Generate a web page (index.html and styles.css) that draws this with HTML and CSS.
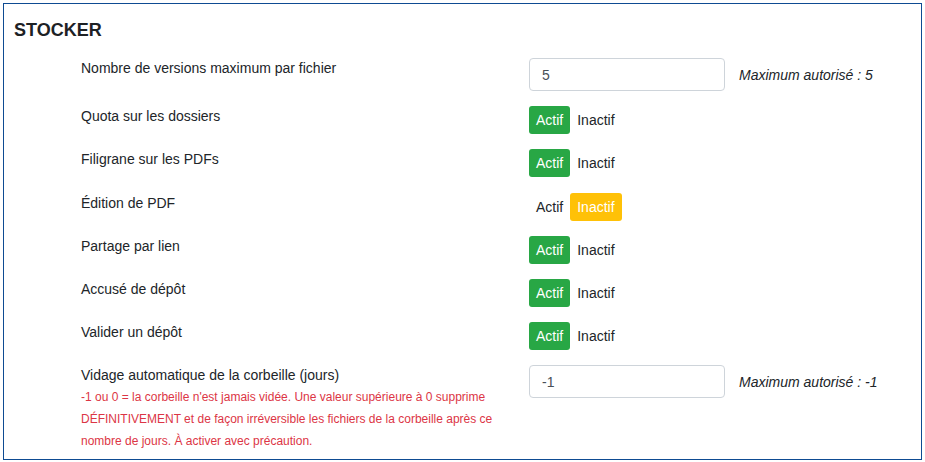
FILE: index.html
```html
<!DOCTYPE html>
<html lang="fr">
<head>
	<meta charset="UTF-8">
	<title>Stocker</title>
	<link rel="stylesheet" href="styles.css">
</head>
<body>
	<div class="panel">
		<h2 class="panel-title">STOCKER</h2>
		<div class="fields">
			<div class="field">
				<div class="field-label">Nombre de versions maximum par fichier</div>
				<div class="field-control">
					<input class="input" type="text" value="5">
					<span class="hint">Maximum autorisé : 5</span>
				</div>
			</div>
			<div class="field">
				<div class="field-label">Quota sur les dossiers</div>
				<div class="field-control">
					<div class="toggle">
						<span class="opt on">Actif</span>
						<span class="opt">Inactif</span>
					</div>
				</div>
			</div>
			<div class="field">
				<div class="field-label">Filigrane sur les PDFs</div>
				<div class="field-control">
					<div class="toggle">
						<span class="opt on">Actif</span>
						<span class="opt">Inactif</span>
					</div>
				</div>
			</div>
			<div class="field">
				<div class="field-label">Édition de PDF</div>
				<div class="field-control">
					<div class="toggle">
						<span class="opt">Actif</span>
						<span class="opt off">Inactif</span>
					</div>
				</div>
			</div>
			<div class="field">
				<div class="field-label">Partage par lien</div>
				<div class="field-control">
					<div class="toggle">
						<span class="opt on">Actif</span>
						<span class="opt">Inactif</span>
					</div>
				</div>
			</div>
			<div class="field">
				<div class="field-label">Accusé de dépôt</div>
				<div class="field-control">
					<div class="toggle">
						<span class="opt on">Actif</span>
						<span class="opt">Inactif</span>
					</div>
				</div>
			</div>
			<div class="field">
				<div class="field-label">Valider un dépôt</div>
				<div class="field-control">
					<div class="toggle">
						<span class="opt on">Actif</span>
						<span class="opt">Inactif</span>
					</div>
				</div>
			</div>
			<div class="field">
				<div class="field-label">
					Vidage automatique de la corbeille (jours)
					<p class="warning">-1 ou 0 = la corbeille n'est jamais vidée. Une valeur supérieure à 0 supprime DÉFINITIVEMENT et de façon irréversible les fichiers de la corbeille après ce nombre de jours. À activer avec précaution.</p>
				</div>
				<div class="field-control">
					<input class="input" type="text" value="-1">
					<span class="hint">Maximum autorisé : -1</span>
				</div>
			</div>
		</div>
	</div>
</body>
</html>
```

FILE: styles.css
```css
* {
	margin: 0;
	padding: 0;
	box-sizing: border-box;
}
body {
	font-family: "Liberation Sans", Arial, sans-serif;
	font-size: 14px;
	color: #212529;
	background-color: #fff;
}
.panel {
	width: 919px;
	height: 457px;
	margin: 3px;
	border: 1px solid #0e4b92;
	padding: 15px 10px 7px 10px;
	overflow: hidden;
}
.panel-title {
	font-size: 18px;
	font-weight: bold;
	line-height: 22px;
	color: #1d2124;
	margin-bottom: 17px;
}
.fields {
	display: flex;
	flex-direction: column;
	gap: 15.2px;
	margin-left: 67px;
}
.field {
	display: grid;
	grid-template-columns: 418px auto;
	column-gap: 30px;
	align-items: start;
}
.field-label {
	line-height: 21px;
}
.warning {
	font-size: 12px;
	line-height: 21.6px;
	color: #dc3545;
	padding-top: 1px;
}
.field-control {
	display: flex;
	align-items: center;
	gap: 14px;
}
.input {
	width: 196px;
	height: 33px;
	border: 1px solid #ced4da;
	border-radius: 4px;
	padding: 0 12px;
	font-family: inherit;
	font-size: 14px;
	color: #495057;
	background: #fff;
}
.hint {
	font-style: italic;
}
.toggle {
	display: flex;
}
.opt {
	display: block;
	height: 28px;
	line-height: 28px;
	padding: 0 7px;
	border-radius: 3px;
}
.opt.on {
	background-color: #28a745;
	color: #fff;
}
.opt.off {
	background-color: #ffc107;
	color: #fff;
}
```
